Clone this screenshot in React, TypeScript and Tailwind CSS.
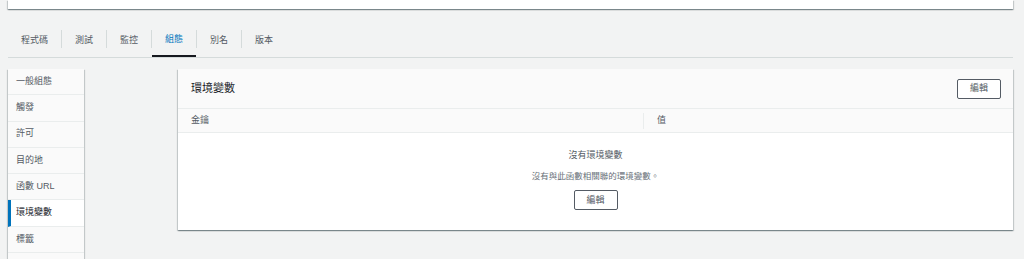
const tabs = ['程式碼', '測試', '監控', '組態', '別名', '版本'];

const menu = ['一般組態', '觸發', '許可', '目的地', '函數 URL', '環境變數', '標籤', ''];

const cardShadow =
  'shadow-[0_1px_1px_0_rgba(0,28,36,0.3),1px_1px_1px_0_rgba(0,28,36,0.15),-1px_1px_1px_0_rgba(0,28,36,0.15)]';

export default function App() {
  return (
    <div
      className="h-[259px] w-[1024px] overflow-hidden bg-[#f2f3f3] pl-2 pr-[11px] text-[#545b64]"
      style={{ fontFamily: '"Liberation Sans", "Noto Sans CJK TC", sans-serif' }}
    >
      {/* top summary card, cut off */}
      <div className={`h-[9px] bg-white ${cardShadow}`} />

      {/* tabs */}
      <div className="mt-3 flex border-b border-[#d5dbdb]">
        {tabs.map((t, i) => (
          <div key={t} className="flex h-[36px] items-center">
            {i > 0 && <span className="h-[18px] w-px bg-[#d5dbdb]" />}
            <div
              className={
                t === '組態'
                  ? 'flex h-full items-center border-b-[2px] border-[#16191f] px-[13px] pt-[4px] text-[9px] text-[#0073bb]'
                  : 'flex h-full items-center px-[13px] pt-[3px] text-[9px]'
              }
            >
              {t}
            </div>
          </div>
        ))}
      </div>

      <div className="mt-[11px] flex items-start">
        {/* side menu */}
        <div className={`w-[76px] bg-[#fafafa] ${cardShadow}`}>
          {menu.map((m, i) => (
            <div
              key={i}
              className={
                m === '環境變數'
                  ? 'flex h-[26.3px] items-center border-b border-[#eaeded] border-l-[3px] border-l-[#0073bb] bg-white pl-[5px] text-[9px] text-[#16191f]'
                  : 'flex h-[26.3px] items-center border-b border-[#eaeded] pl-[8px] text-[9px]'
              }
            >
              {m}
            </div>
          ))}
        </div>

        {/* env vars card */}
        <div className={`ml-[94px] flex-1 bg-white ${cardShadow}`}>
          <div className="flex h-[40px] items-center justify-between border-b border-[#eaeded] bg-[#fafafa] pl-[13px] pr-[12px]">
            <h2 className="text-[11px] text-[#16191f]">環境變數</h2>
            <button
              type="button"
              className="flex h-[20px] w-[44px] items-center justify-center rounded-[2px] border border-[#545b64] bg-white text-[9px] text-[#545b64]"
            >
              編輯
            </button>
          </div>
          <div className="flex h-[24px] items-center border-b border-[#eaeded] bg-[#fafafa] text-[9px]">
            <div className="flex h-full w-[465px] items-center pl-[13px]">金鑰</div>
            <span className="h-[16px] w-px bg-[#eaeded]" />
            <div className="pl-[13px]">值</div>
          </div>
          <div className="flex flex-col items-center pb-[20px] pt-[16px]">
            <p className="text-[9px] text-[#545b64]">沒有環境變數</p>
            <p className="mt-[7px] text-[8.5px] text-[#687078]">沒有與此函數相關聯的環境變數。</p>
            <button
              type="button"
              className="mt-[8px] flex h-[20px] w-[44px] items-center justify-center rounded-[2px] border border-[#545b64] bg-white text-[9px] text-[#545b64]"
            >
              編輯
            </button>
          </div>
        </div>
      </div>
    </div>
  );
}
